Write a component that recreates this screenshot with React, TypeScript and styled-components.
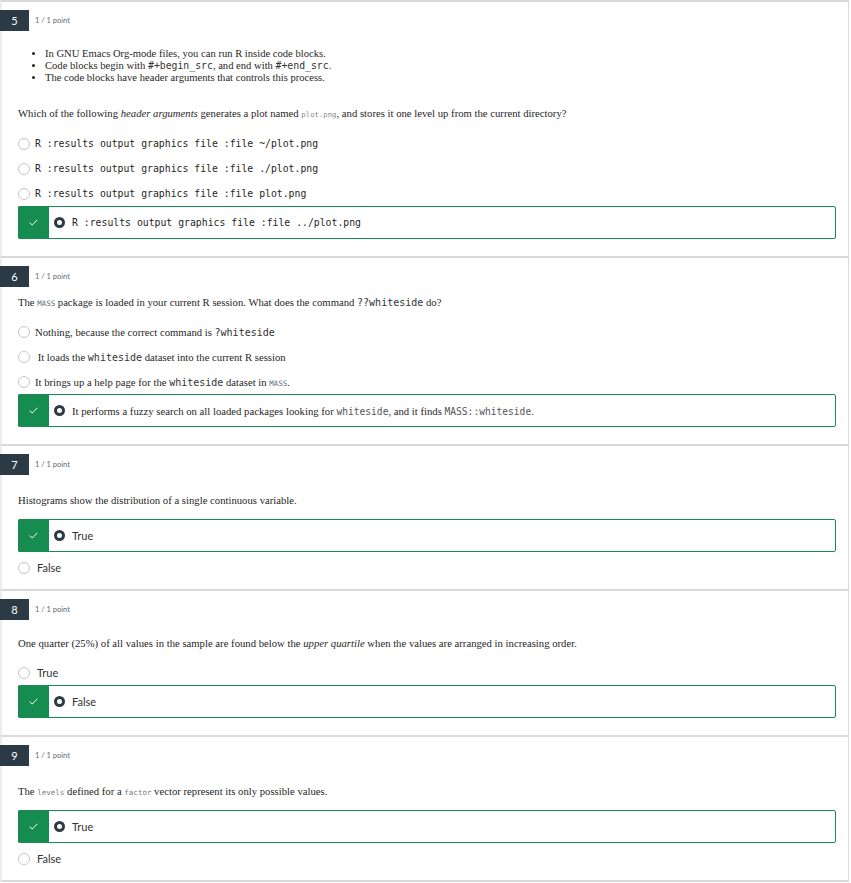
import React from "react";
import styled, { createGlobalStyle } from "styled-components";

const GREEN = "#168c50";
const SLATE = "#2c3a45";

const GlobalStyle = createGlobalStyle`
  html, body { margin: 0; padding: 0; background: #ffffff; }
  body { font-family: "Liberation Serif", "Times New Roman", serif; color: #1f1f1f; }
`;

const Page = styled.main`
  width: 849px;
`;

const Card = styled.section`
  border-top: 2px solid #d9d9d9;
  border-left: 2px solid #ececec;
  border-right: 1px solid #dcdcdc;
  padding: 8px 12px 9px 16px;
  &:last-child {
    border-bottom: 2px solid #d9d9d9;
  }
`;

const Header = styled.header`
  display: flex;
  align-items: center;
  margin-left: -18px;
`;

const Badge = styled.div`
  width: 29px;
  height: 21px;
  background: ${SLATE};
  color: #ffffff;
  font-family: Lato, "Noto Sans", sans-serif;
  font-size: 11px;
  display: flex;
  align-items: center;
  justify-content: center;
`;

const Score = styled.span`
  margin-left: 6px;
  font-family: Lato, "Noto Sans", sans-serif;
  font-size: 7.5px;
  color: #5f6973;
`;

const Bullets = styled.ul`
  margin: 17px 0 0;
  padding-left: 27px;
  font-size: 10.6px;
  line-height: 12px;
  list-style: disc;
`;

const Question = styled.p<{ $top: number }>`
  margin: ${(p) => p.$top}px 0 0;
  font-size: 10.7px;
  line-height: 14px;
`;

const Code = styled.code<{ $size: number; $tone?: string }>`
  font-family: "DejaVu Sans Mono", "Liberation Mono", monospace;
  font-size: ${(p) => p.$size}px;
  line-height: 1;
  color: ${(p) => p.$tone ?? "#333"};
`;

const Options = styled.div<{ $top?: number }>`
  display: flex;
  flex-direction: column;
  margin-top: ${(p) => p.$top ?? 10}px;
`;

const OptionRow = styled.div`
  display: flex;
  align-items: center;
  height: 25px;
`;

const Radio = styled.span`
  width: 10px;
  height: 10px;
  border: 1px solid #c6c6c6;
  border-radius: 50%;
  background: #fff;
  flex: none;
`;

const SelectedBox = styled.div`
  display: flex;
  align-items: center;
  height: 31px;
  border: 1px solid ${GREEN};
  border-radius: 2px;
  margin: 0 0 3px;
  &:first-child {
    margin-top: 2px;
  }
  &:last-child {
    margin-bottom: 8px;
  }
`;

const CheckBlock = styled.div`
  align-self: stretch;
  width: 31px;
  margin: -1px 0 -1px -1px;
  background: ${GREEN};
  border-radius: 2px 0 0 2px;
  display: flex;
  align-items: center;
  justify-content: center;
`;

const FilledRadio = styled.span`
  width: 5px;
  height: 5px;
  border: 3px solid ${SLATE};
  border-radius: 50%;
  background: #fff;
  margin-left: 5px;
  flex: none;
`;

type Kind = "mono" | "serif" | "sans";

const Label = styled.span<{ $kind: Kind; $gap: number }>`
  margin-left: ${(p) => p.$gap}px;
  white-space: pre;
  line-height: 14px;
  color: ${(p) => (p.$kind === "sans" ? "#333" : "#1f1f1f")};
  font-family: ${(p) =>
    p.$kind === "sans"
      ? 'Lato, "Noto Sans", sans-serif'
      : p.$kind === "serif"
      ? '"Liberation Serif", serif'
      : '"DejaVu Sans Mono", "Liberation Mono", monospace'};
  font-size: ${(p) => (p.$kind === "mono" ? "9.8px" : p.$kind === "sans" ? "11px" : "10.7px")};
`;

const Check = () => (
  <svg width="9" height="7" viewBox="0 0 9 7" fill="none">
    <path d="M0.6 3.6 L3.2 6 L8.4 0.8" stroke="#fff" strokeWidth="1" />
  </svg>
);

type Opt = { text: React.ReactNode; kind: Kind; selected?: boolean };

const Option = ({ text, kind, selected }: Opt) =>
  selected ? (
    <SelectedBox>
      <CheckBlock>
        <Check />
      </CheckBlock>
      <FilledRadio />
      <Label $kind={kind} $gap={7}>
        {text}
      </Label>
    </SelectedBox>
  ) : (
    <OptionRow>
      <Radio />
      <Label $kind={kind} $gap={kind === "sans" ? 7 : 5}>
        {text}
      </Label>
    </OptionRow>
  );

const QHeader = ({ n }: { n: number }) => (
  <Header>
    <Badge>{n}</Badge>
    <Score>1 / 1 point</Score>
  </Header>
);

export default function App() {
  return (
    <Page>
      <GlobalStyle />
      <Card>
        <QHeader n={5} />
        <Bullets>
          <li>In GNU Emacs Org-mode files, you can run R inside code blocks.</li>
          <li>
            Code blocks begin with <Code $size={9.8}>#+begin_src</Code>, and end with{" "}
            <Code $size={9.8}>#+end_src</Code>.
          </li>
          <li>The code blocks have header arguments that controls this process.</li>
        </Bullets>
        <Question $top={22}>
          Which of the following <em>header arguments</em> generates a plot named{" "}
          <Code $size={7.3} $tone="#8a8a8a">plot.png</Code>, and stores it one level up from the current directory?
        </Question>
        <Options $top={11}>
          <Option kind="mono" text="R :results output graphics file :file ~/plot.png" />
          <Option kind="mono" text="R :results output graphics file :file ./plot.png" />
          <Option kind="mono" text="R :results output graphics file :file plot.png" />
          <Option kind="mono" selected text="R :results output graphics file :file ../plot.png" />
        </Options>
      </Card>

      <Card>
        <QHeader n={6} />
        <Question $top={8}>
          The <Code $size={7.4} $tone="#5b6b7a">MASS</Code> package is loaded in your current R session. What does the
          command <Code $size={10}>??whiteside</Code> do?
        </Question>
        <Options>
          <Option
            kind="serif"
            text={
              <>
                Nothing, because the correct command is <Code $size={10}>?whiteside</Code>
              </>
            }
          />
          <Option
            kind="serif"
            text={
              <>
                {" "}It loads the <Code $size={10}>whiteside</Code> dataset into the current R session
              </>
            }
          />
          <Option
            kind="serif"
            text={
              <>
                It brings up a help page for the <Code $size={10}>whiteside</Code> dataset in{" "}
                <Code $size={7.4} $tone="#5b6b7a">MASS</Code>.
              </>
            }
          />
          <Option
            kind="serif"
            selected
            text={
              <>
                It performs a fuzzy search on all loaded packages looking for{" "}
                <Code $size={9.6} $tone="#555">whiteside</Code>, and it finds{" "}
                <Code $size={9.6} $tone="#555">MASS::whiteside</Code>.
              </>
            }
          />
        </Options>
      </Card>

      <Card>
        <QHeader n={7} />
        <Question $top={18}>Histograms show the distribution of a single continuous variable.</Question>
        <Options>
          <Option kind="sans" selected text="True" />
          <Option kind="sans" text="False" />
        </Options>
      </Card>

      <Card>
        <QHeader n={8} />
        <Question $top={16}>
          One quarter (25%) of all values in the sample are found below the <em>upper quartile</em> when the values are
          arranged in increasing order.
        </Question>
        <Options>
          <Option kind="sans" text="True" />
          <Option kind="sans" selected text="False" />
        </Options>
      </Card>

      <Card>
        <QHeader n={9} />
        <Question $top={18}>
          The <Code $size={7.5} $tone="#7a7a7a">levels</Code> defined for a{" "}
          <Code $size={7.5} $tone="#7a7a7a">factor</Code> vector represent its only possible values.
        </Question>
        <Options>
          <Option kind="sans" selected text="True" />
          <Option kind="sans" text="False" />
        </Options>
      </Card>
    </Page>
  );
}
